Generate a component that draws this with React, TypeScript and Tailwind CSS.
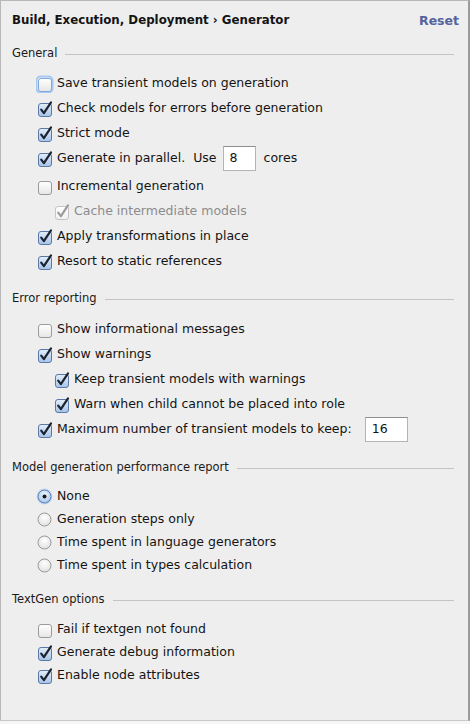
import type { ReactNode } from 'react'

const font = { fontFamily: '"DejaVu Sans", "Liberation Sans", sans-serif' }

type BoxState = 'on' | 'off' | 'disabled' | 'focus'

function CheckBox({ state }: { state: BoxState }) {
  const on = state === 'on' || state === 'disabled'
  const fillTop = state === 'on' ? '#e4eefa' : '#ffffff'
  const fillBottom = state === 'on' ? '#a6c3e8' : state === 'disabled' ? '#f0f0f0' : '#e6e6e6'
  const stroke = state === 'on' ? '#5a79a6' : state === 'disabled' ? '#c4c4c4' : state === 'focus' ? '#7fa8dc' : '#9a9a9a'
  const id = `cb-${state}`
  return (
    <svg width="18" height="18" viewBox="0 0 18 18" className="shrink-0">
      <defs>
        <linearGradient id={id} x1="0" y1="0" x2="0" y2="1">
          <stop offset="0" stopColor={fillTop} />
          <stop offset="1" stopColor={fillBottom} />
        </linearGradient>
      </defs>
      {state === 'focus' && <rect x="0.5" y="1.5" width="16" height="16" rx="4" fill="none" stroke="#a9c8ef" strokeWidth="2" />}
      <rect x="2.5" y="3.5" width="13" height="13" rx="2.5" fill={`url(#${id})`} stroke={stroke} />
      {on && (
        <path
          d="M5.2 9.6 L7.9 13.2 L15 2.4"
          fill="none"
          stroke={state === 'disabled' ? '#9c9c9c' : '#1c2330'}
          strokeWidth="2.2"
          strokeLinecap="round"
          strokeLinejoin="round"
        />
      )}
    </svg>
  )
}

function Radio({ on }: { on?: boolean }) {
  const id = on ? 'rd-on' : 'rd-off'
  return (
    <svg width="17" height="17" viewBox="0 0 17 17" className="shrink-0">
      <defs>
        <radialGradient id={id} cx="0.5" cy="0.35" r="0.7">
          <stop offset="0" stopColor={on ? '#f0f6fd' : '#ffffff'} />
          <stop offset="1" stopColor={on ? '#9fc0ea' : '#dedede'} />
        </radialGradient>
      </defs>
      {on && <circle cx="8.5" cy="8.5" r="8" fill="#c4d9f3" />}
      <circle cx="8.5" cy="8.5" r="6.5" fill={`url(#${id})`} stroke={on ? '#5f82b3' : '#9a9a9a'} />
      {on && <circle cx="8.5" cy="8.5" r="2" fill="#1a1a1a" />}
    </svg>
  )
}

function Row({ indent, h = 'h-[25px]', children }: { indent?: boolean; h?: string; children: ReactNode }) {
  return <div className={`flex items-center gap-[3px] ${h} ${indent ? 'pl-[52px]' : 'pl-[35px]'}`}>{children}</div>
}

function Check({ label, state = 'on', indent, h }: { label: string; state?: BoxState; indent?: boolean; h?: string }) {
  return (
    <Row indent={indent} h={h}>
      <CheckBox state={state} />
      <span className={`text-[12.5px] ${state === 'disabled' ? 'text-[#8c8c8c]' : 'text-[#141414]'}`}>{label}</span>
    </Row>
  )
}

function Section({ title, className = '' }: { title: string; className?: string }) {
  return (
    <div className={`flex items-center h-[26px] pl-[11px] pr-[14px] ${className}`}>
      <span className="text-[11.5px] text-[#1a1a1a]">{title}</span>
      <div className="flex-1 h-px bg-[#c4c4c4] ml-[8px]" />
    </div>
  )
}

function NumberBox({ value, w }: { value: string; w: string }) {
  return (
    <div className={`${w} h-[25px] bg-white border border-[#b4b4b4] border-t-[#8e8e8e] flex items-center pl-[6px] text-[12.5px] text-[#141414]`}>
      {value}
    </div>
  )
}

export default function App() {
  return (
    <div className="w-[470px] h-[724px] bg-[#f6f6f6]" style={font}>
      <div className="w-[470px] h-[721px] bg-[#eeeeee] border-l border-t border-[#b8b8b8] border-r-[2px] border-r-[#9c9c9c] border-b border-b-[#c8c8c8]">
        <div className="flex items-center justify-between h-[40px] pl-[11px] pr-[9px]">
          <span className="text-[11.8px] font-bold text-[#141414]">Build, Execution, Deployment › Generator</span>
          <span className="text-[12.5px] font-bold text-[#55639c]">Reset</span>
        </div>

        <Section title="General" />
        <div className="pt-[4px]">
          <Check label="Save transient models on generation" state="focus" />
          <Check label="Check models for errors before generation" />
          <Check label="Strict mode" />
          <Row>
            <CheckBox state="on" />
            <span className="text-[12.5px] text-[#141414]">Generate in parallel.</span>
            <span className="text-[12.5px] text-[#141414] ml-[5px] mr-[3px]">Use</span>
            <NumberBox value="8" w="w-[33px]" />
            <span className="text-[12.5px] text-[#141414] ml-[5px]">cores</span>
          </Row>
          <div className="pt-[3px]">
            <Check label="Incremental generation" state="off" />
            <Check label="Cache intermediate models" state="disabled" indent />
            <Check label="Apply transformations in place" />
            <Check label="Resort to static references" />
          </div>
        </div>

        <Section title="Error reporting" className="mt-[12px]" />
        <div className="pt-[5px]">
          <Check label="Show informational messages" state="off" />
          <Check label="Show warnings" />
          <Check label="Keep transient models with warnings" indent />
          <Check label="Warn when child cannot be placed into role" indent />
          <Row>
            <CheckBox state="on" />
            <span className="text-[12.5px] text-[#141414] mr-[10px]">Maximum number of transient models to keep:</span>
            <NumberBox value="16" w="w-[43px]" />
          </Row>
        </div>

        <Section title="Model generation performance report" className="mt-[13px]" />
        <div className="pt-[4px]">
          {['None', 'Generation steps only', 'Time spent in language generators', 'Time spent in types calculation'].map((l, i) => (
            <Row key={l} h="h-[23px]">
              <Radio on={i === 0} />
              <span className="text-[12.5px] text-[#141414] ml-[1px]">{l}</span>
            </Row>
          ))}
        </div>

        <Section title="TextGen options" className="mt-[10px]" />
        <div className="pt-[5px]">
          <Check label="Fail if textgen not found" state="off" h="h-[23px]" />
          <Check label="Generate debug information" h="h-[23px]" />
          <Check label="Enable node attributes" h="h-[23px]" />
        </div>
      </div>
    </div>
  )
}
